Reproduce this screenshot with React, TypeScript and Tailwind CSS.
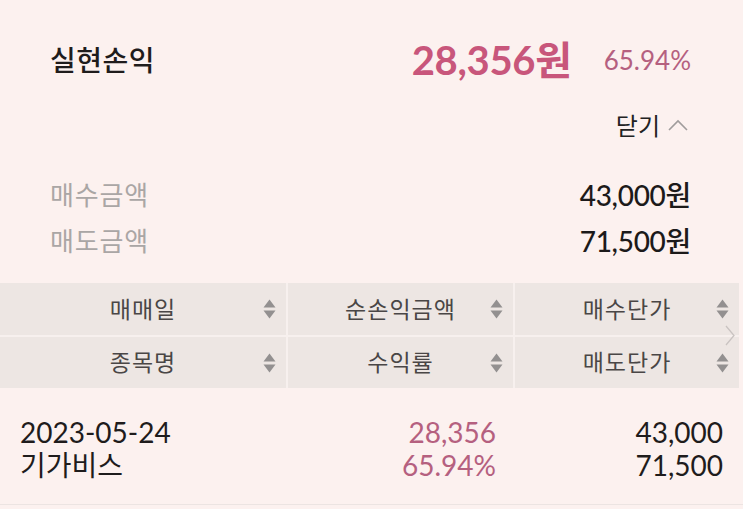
import React from "react";

const Sort = () => (
  <svg width="13" height="21" viewBox="0 0 13 21" className="shrink-0">
    <polygon points="6.5,1 12.5,9 0.5,9" fill="#939090" />
    <polygon points="0.5,12 12.5,12 6.5,20" fill="#939090" />
  </svg>
);

const HeadCell = ({ label, border }: { label: string; border?: boolean }) => (
  <div className={`relative flex items-center justify-center h-full ${border ? "border-l-2 border-[#f7f0ee]" : ""}`}>
    <span className="text-[23px] text-[#4a4646] tracking-[1px]">{label}</span>
    <span className="absolute right-[10px] top-1/2 -translate-y-1/2 flex"><Sort /></span>
  </div>
);

export default function App() {
  return (
    <div
      className="w-[743px] h-[509px] bg-[#fcf1ef] relative overflow-hidden flex flex-col"
      style={{ fontFamily: "Lato, 'Noto Sans CJK KR', sans-serif" }}
    >
      <div className="mt-[35px] h-[50px] pl-[50px] pr-[52px] flex items-center leading-none">
        <span className="text-[28px] font-medium text-[#1f1c1c] tracking-[0.5px]">실현손익</span>
        <span className="ml-auto text-[40px] font-bold text-[#c8567b] tracking-[-0.3px]">28,356원</span>
        <span className="ml-[32px] text-[26px] text-[#b5607f]">65.94%</span>
      </div>
      <div className="mt-[26px] h-[30px] pr-[54px] flex items-center justify-end leading-none">
        <span className="text-[24px] text-[#222]">닫기</span>
        <svg width="22" height="14" viewBox="0 0 22 14" className="ml-[7px] mt-[-3px]">
          <polyline points="2,12 11,3 20,12" fill="none" stroke="#a09c9c" strokeWidth="1.6" />
        </svg>
      </div>
      <div className="mt-[31px] pl-[50px] pr-[52px] flex flex-col leading-none">
        <div className="h-[46px] flex items-center justify-between">
          <span className="text-[26px] text-[#aaa6a5] tracking-[0.8px]">매수금액</span>
          <span className="text-[28px] text-[#1c1a1a] font-medium tracking-[-0.3px]">43,000원</span>
        </div>
        <div className="h-[46px] flex items-center justify-between">
          <span className="text-[26px] text-[#aaa6a5] tracking-[0.8px]">매도금액</span>
          <span className="text-[28px] text-[#1c1a1a] font-medium tracking-[-0.3px]">71,500원</span>
        </div>
      </div>
      <div className="mt-[19px] w-[739px] bg-[#ede6e3] flex flex-col relative leading-none">
        <div className="grid grid-cols-[286px_227px_226px] h-[52px]">
          <HeadCell label="매매일" />
          <HeadCell label="순손익금액" border />
          <HeadCell label="매수단가" border />
        </div>
        <div className="h-[2px] bg-[#f7f0ee]" />
        <div className="grid grid-cols-[286px_227px_226px] h-[51px]">
          <HeadCell label="종목명" />
          <HeadCell label="수익률" border />
          <HeadCell label="매도단가" border />
        </div>
        <svg width="10" height="21" viewBox="0 0 10 21" className="absolute right-[4px] top-[42px]">
          <polyline points="1,1 9,10.5 1,20" fill="none" stroke="#c9c3c1" strokeWidth="1.3" />
        </svg>
      </div>
      <div className="mt-[28px] w-[739px] grid grid-cols-[286px_227px_226px] text-[28px] leading-[33px]">
        <div className="flex flex-col pl-[20px] text-[#1f1c1c]">
          <span>2023-05-24</span>
          <span>기가비스</span>
        </div>
        <div className="flex flex-col items-end pr-[17px] text-[#b5607f]">
          <span>28,356</span>
          <span>65.94%</span>
        </div>
        <div className="flex flex-col items-end pr-[16px] text-[#1f1c1c]">
          <span>43,000</span>
          <span>71,500</span>
        </div>
      </div>
      <div className="absolute left-0 right-0 top-[504px] h-[1px] bg-[#ece4e2]" />
    </div>
  );
}
